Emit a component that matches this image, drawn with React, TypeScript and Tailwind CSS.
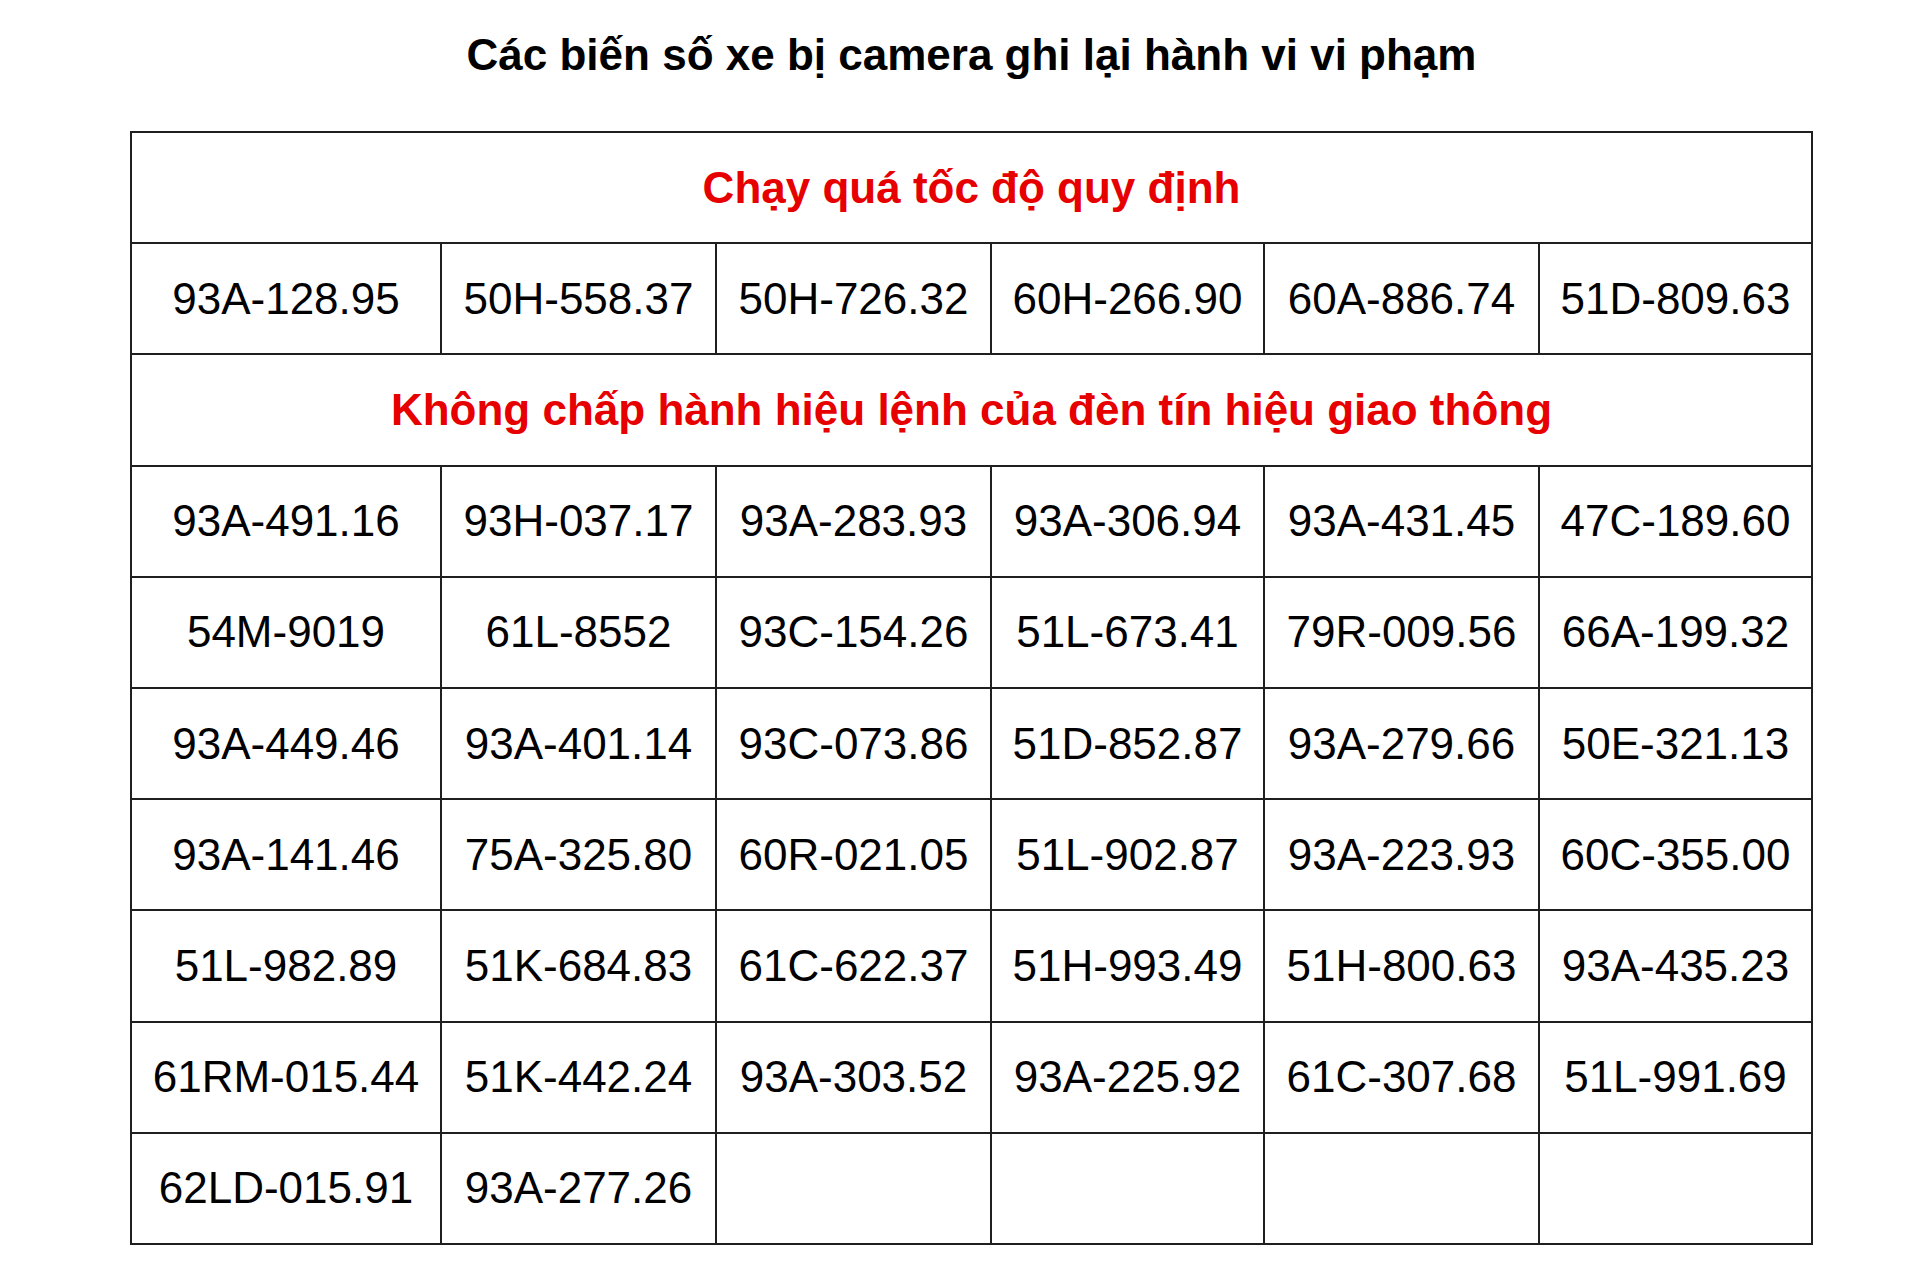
const speeding = ["93A-128.95", "50H-558.37", "50H-726.32", "60H-266.90", "60A-886.74", "51D-809.63"];

const signals = [
  "93A-491.16", "93H-037.17", "93A-283.93", "93A-306.94", "93A-431.45", "47C-189.60",
  "54M-9019", "61L-8552", "93C-154.26", "51L-673.41", "79R-009.56", "66A-199.32",
  "93A-449.46", "93A-401.14", "93C-073.86", "51D-852.87", "93A-279.66", "50E-321.13",
  "93A-141.46", "75A-325.80", "60R-021.05", "51L-902.87", "93A-223.93", "60C-355.00",
  "51L-982.89", "51K-684.83", "61C-622.37", "51H-993.49", "51H-800.63", "93A-435.23",
  "61RM-015.44", "51K-442.24", "93A-303.52", "93A-225.92", "61C-307.68", "51L-991.69",
  "62LD-015.91", "93A-277.26", "", "", "", "",
];

function Heading({ children }: { children: string }) {
  return (
    <div className="col-span-6 flex h-[111.2px] items-center justify-center border-r-2 border-b-2 border-[#1f1f1f] text-[44px] font-bold text-[#e60000]">
      {children}
    </div>
  );
}

function Plate({ value }: { value: string }) {
  return (
    <div className="flex h-[111.2px] items-center justify-center whitespace-nowrap border-r-2 border-b-2 border-[#1f1f1f] text-[44px] text-black">
      {value}
    </div>
  );
}

export default function App() {
  return (
    <div
      className="min-h-screen bg-white pt-[30px]"
      style={{ fontFamily: "'Liberation Sans', Arial, sans-serif" }}
    >
      <div className="ml-[130px] w-[1683px]">
        <h1 className="text-center text-[44px] font-bold leading-[50px] text-black">
          Các biến số xe bị camera ghi lại hành vi vi phạm
        </h1>

        {/* Table */}
        <div className="mt-[51px] grid grid-cols-[310px_275px_275px_273px_275px_273px] border-t-2 border-l-2 border-[#1f1f1f]">
          <Heading>Chạy quá tốc độ quy định</Heading>
          {speeding.map((p, i) => (
            <Plate key={"s" + i} value={p} />
          ))}
          <Heading>Không chấp hành hiệu lệnh của đèn tín hiệu giao thông</Heading>
          {signals.map((p, i) => (
            <Plate key={"t" + i} value={p} />
          ))}
        </div>
      </div>
    </div>
  );
}
